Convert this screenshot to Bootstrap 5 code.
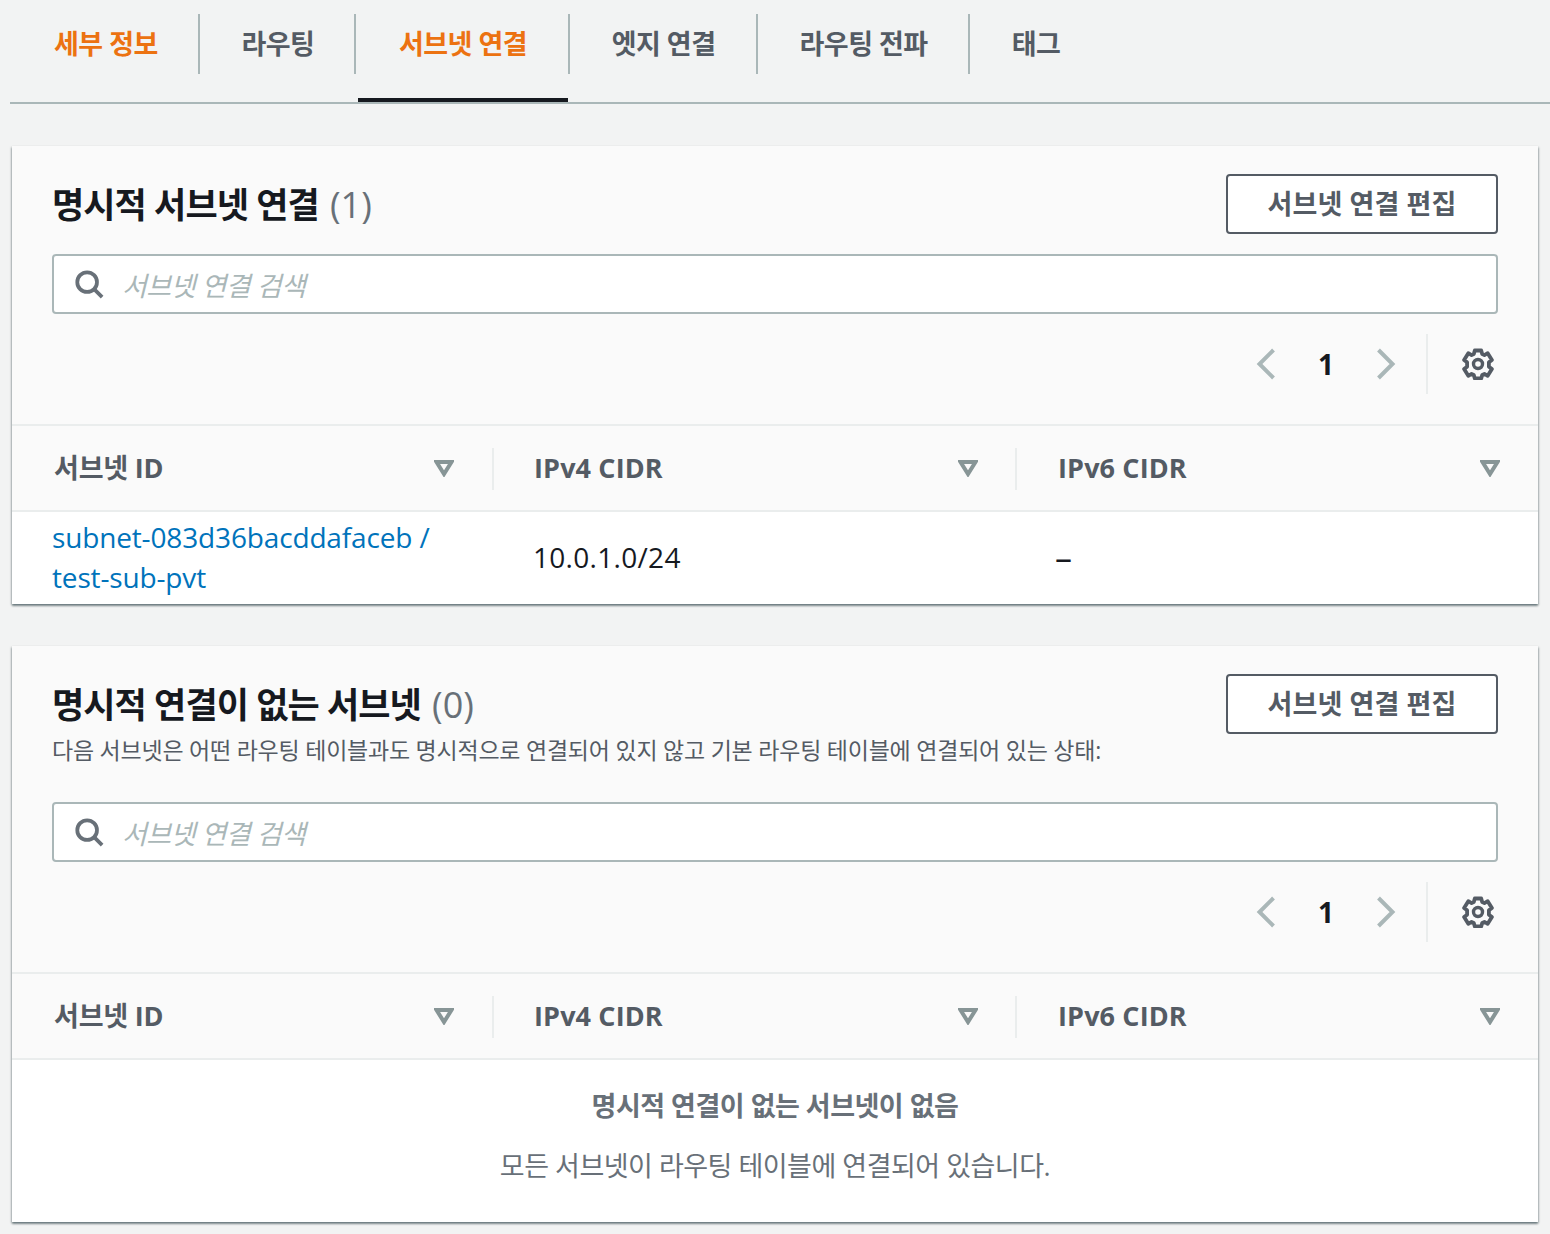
<!DOCTYPE html>
<html lang="ko">
<head>
<meta charset="utf-8">
<title>서브넷 연결</title>
<link href="https://cdn.jsdelivr.net/npm/bootstrap@5.3.0/dist/css/bootstrap.min.css" rel="stylesheet">
<style>
html, body { background: #f2f3f3; }
body { font-family: "Open Sans", "Noto Sans CJK KR", sans-serif; font-size: 28px; line-height: 40px; color: #16191f; margin: 0; height: 1234px; overflow: hidden; }
.tabbar { margin-left: 10px; height: 104px; border-bottom: 2px solid #aab7b8; }
.tabitem { position: relative; height: 102px; padding-top: 14px; }
.tabitem > span { display: block; height: 60px; line-height: 60px; padding: 0 40.5px 0 41.5px; border-right: 2px solid #aab7b8; font-size: 27px; font-weight: 700; color: #545b64; letter-spacing: -.5px; }
.tabitem:first-child > span { padding-left: 44px; padding-right: 40px; }
.tabitem:nth-child(2) > span { padding-right: 39.5px; }
.tabitem:last-child > span { border-right: 0; }
.tabitem.on > span { color: #ec7211; }
.tabitem.cur > span { padding-left: 43px; padding-right: 41px; }
.tabitem.cur::after { content: ""; position: absolute; left: 2px; right: 2px; bottom: 0; height: 4px; background: #16191f; }
.panel { margin: 42px 12px 0; background: #fafafa; box-shadow: 0 2px 2px 0 rgba(0,28,36,.4), 1px 1px 2px 0 rgba(0,28,36,.18), -1px 1px 2px 0 rgba(0,28,36,.18); }
.panel + .panel { margin-top: 42px; }
.panel-top { padding: 28px 40px 30px; border-bottom: 2px solid #eaeded; }
.title-row { height: 60px; }
.ttl { font-size: 35px; line-height: 60px; font-weight: 700; margin: 1px 0 0; letter-spacing: -.9px; }
.ttl small { font-size: 36px; font-weight: 500; color: #687078; letter-spacing: 0; margin-left: 3px; }
.desc { font-size: 23px; line-height: 32px; color: #545b64; margin: 0; letter-spacing: -.23px; }
.editbtn { width: 272px; height: 60px; padding: 0; background: #fff; border: 2px solid #545b64; border-radius: 4px; color: #545b64; font-size: 27px; font-weight: 700; line-height: 54px; letter-spacing: .1px; flex: none; }
.searchbox { height: 60px; margin-top: 20px; background: #fff; border: 2px solid #aab7b8; border-radius: 4px; padding-left: 20px; gap: 18px; }
.gap-desc { margin-top: 36px; }
.searchbox input { border: 0; outline: 0; flex: 1; background: transparent; font-size: 27px; font-style: italic; color: #16191f; letter-spacing: -.5px; padding: 4px 0 0; }
.searchbox input::placeholder { color: #aab7b8; opacity: 1; }
.pager { height: 60px; margin-top: 20px; padding-right: 4px; }
.pagenum { font-size: 28px; font-weight: 700; width: 100px; text-align: center; }
.pagesep { width: 2px; height: 60px; background: #eaeded; margin: 0 34px 0 30px; }
.grid-head { height: 86px; border-bottom: 2px solid #eaeded; }
.hcell { position: relative; height: 84px; padding-left: 41px; font-weight: 700; color: #545b64; font-size: 27px; letter-spacing: .12px; }
.hcell.c1 { width: 481px; padding-left: 42px; padding-right: 39px; letter-spacing: -.2px; }
.hcell.c2 { width: 524px; padding-right: 39px; }
.hcell.c3 { width: 521px; padding-right: 38px; }
.hcell::before { content: ""; position: absolute; right: 0; top: 22px; height: 42px; width: 2px; background: #eaeded; }
.hcell.c3::before { display: none; }
.hcell.c1::before { right: -1px; }
.grid-body { background: #fff; height: 92px; padding-bottom: 2px; }
.bcell { flex: none; display: flex; align-items: center; }
.bcell.c1 { width: 481px; padding-left: 40px; padding-right: 40px; }
.bcell.c2 { width: 524px; padding-left: 40px; letter-spacing: .3px; }
.bcell.c3 { width: 521px; padding-left: 38px; font-size: 34px; }
.rlink { color: #0073bb; text-decoration: none; letter-spacing: -.15px; }
.empty { background: #fff; height: 162px; text-align: center; padding-top: 26px; }
.empty-t { font-weight: 700; font-size: 27px; color: #687078; letter-spacing: -.5px; margin: 0 0 20px; }
.empty-d { font-size: 27px; color: #687078; letter-spacing: -.5px; margin: 0; }
</style>
</head>
<body>
<svg width="0" height="0" class="d-block">
  <defs>
    <symbol id="i-search" viewBox="0 0 32 32"><circle cx="14" cy="14" r="10.5" fill="none" stroke="#687078" stroke-width="4"/><path d="M22 22l8 8" stroke="#687078" stroke-width="4" fill="none"/></symbol>
    <symbol id="i-filter" viewBox="0 0 20 17"><path d="M2.5 2h15L10 14z" fill="none" stroke="#879596" stroke-width="4" stroke-linejoin="miter"/></symbol>
    <symbol id="i-left" viewBox="0 0 20 32"><path d="M17.5 2L3.5 16l14 14" fill="none" stroke="#aab7b8" stroke-width="4"/></symbol>
    <symbol id="i-right" viewBox="0 0 20 32"><path d="M2.5 2l14 14-14 14" fill="none" stroke="#aab7b8" stroke-width="4"/></symbol>
    <symbol id="i-gear" viewBox="0 0 32 32"><g fill="none" stroke="#545b64"><circle cx="16" cy="16" r="4.5" stroke-width="3.4"/><path stroke-width="3.8" stroke-linejoin="round" d="M12.8 2.5h6.4l1 3.6 2.2 1 3.3-1.9 4.2 6.8-3 2.3v4.4l3 2.3-4.2 6.8-3.3-1.9-2.2 1-1 3.6h-6.4l-1-3.6-2.2-1-3.3 1.9-4.2-6.8 3-2.3v-4.4l-3-2.3 4.2-6.8 3.3 1.9 2.2-1z"/></g></symbol>
  </defs>
</svg>

<nav class="tabbar d-flex">
  <div class="tabitem on"><span>세부 정보</span></div>
  <div class="tabitem"><span>라우팅</span></div>
  <div class="tabitem on cur"><span>서브넷 연결</span></div>
  <div class="tabitem"><span>엣지 연결</span></div>
  <div class="tabitem"><span>라우팅 전파</span></div>
  <div class="tabitem"><span>태그</span></div>
</nav>

<section class="panel">
  <div class="panel-top">
    <div class="title-row d-flex justify-content-between">
      <h2 class="ttl">명시적 서브넷 연결 <small>(1)</small></h2>
      <button type="button" class="btn editbtn">서브넷 연결 편집</button>
    </div>
    <div class="searchbox d-flex align-items-center">
      <svg width="30" height="30"><use href="#i-search"/></svg>
      <input type="text" placeholder="서브넷 연결 검색">
    </div>
    <div class="pager d-flex align-items-center justify-content-end">
      <svg width="20" height="32"><use href="#i-left"/></svg>
      <span class="pagenum">1</span>
      <svg width="20" height="32"><use href="#i-right"/></svg>
      <span class="pagesep"></span>
      <svg width="32" height="32"><use href="#i-gear"/></svg>
    </div>
  </div>
  <div class="grid-head d-flex">
    <div class="hcell c1 d-flex align-items-center justify-content-between"><span>서브넷 ID</span><svg width="20" height="17"><use href="#i-filter"/></svg></div>
    <div class="hcell c2 d-flex align-items-center justify-content-between"><span>IPv4 CIDR</span><svg width="20" height="17"><use href="#i-filter"/></svg></div>
    <div class="hcell c3 d-flex align-items-center justify-content-between"><span>IPv6 CIDR</span><svg width="20" height="17"><use href="#i-filter"/></svg></div>
  </div>
  <div class="grid-body d-flex">
    <div class="bcell c1"><a class="rlink" href="#">subnet-083d36bacddafaceb / test-sub-pvt</a></div>
    <div class="bcell c2">10.0.1.0/24</div>
    <div class="bcell c3">–</div>
  </div>
</section>

<section class="panel">
  <div class="panel-top">
    <div class="title-row d-flex justify-content-between">
      <h2 class="ttl">명시적 연결이 없는 서브넷 <small>(0)</small></h2>
      <button type="button" class="btn editbtn">서브넷 연결 편집</button>
    </div>
    <p class="desc">다음 서브넷은 어떤 라우팅 테이블과도 명시적으로 연결되어 있지 않고 기본 라우팅 테이블에 연결되어 있는 상태:</p>
    <div class="searchbox gap-desc d-flex align-items-center">
      <svg width="30" height="30"><use href="#i-search"/></svg>
      <input type="text" placeholder="서브넷 연결 검색">
    </div>
    <div class="pager d-flex align-items-center justify-content-end">
      <svg width="20" height="32"><use href="#i-left"/></svg>
      <span class="pagenum">1</span>
      <svg width="20" height="32"><use href="#i-right"/></svg>
      <span class="pagesep"></span>
      <svg width="32" height="32"><use href="#i-gear"/></svg>
    </div>
  </div>
  <div class="grid-head d-flex">
    <div class="hcell c1 d-flex align-items-center justify-content-between"><span>서브넷 ID</span><svg width="20" height="17"><use href="#i-filter"/></svg></div>
    <div class="hcell c2 d-flex align-items-center justify-content-between"><span>IPv4 CIDR</span><svg width="20" height="17"><use href="#i-filter"/></svg></div>
    <div class="hcell c3 d-flex align-items-center justify-content-between"><span>IPv6 CIDR</span><svg width="20" height="17"><use href="#i-filter"/></svg></div>
  </div>
  <div class="empty">
    <p class="empty-t">명시적 연결이 없는 서브넷이 없음</p>
    <p class="empty-d">모든 서브넷이 라우팅 테이블에 연결되어 있습니다.</p>
  </div>
</section>
<script src="https://cdn.jsdelivr.net/npm/bootstrap@5.3.0/dist/js/bootstrap.bundle.min.js"></script>
</body>
</html>
